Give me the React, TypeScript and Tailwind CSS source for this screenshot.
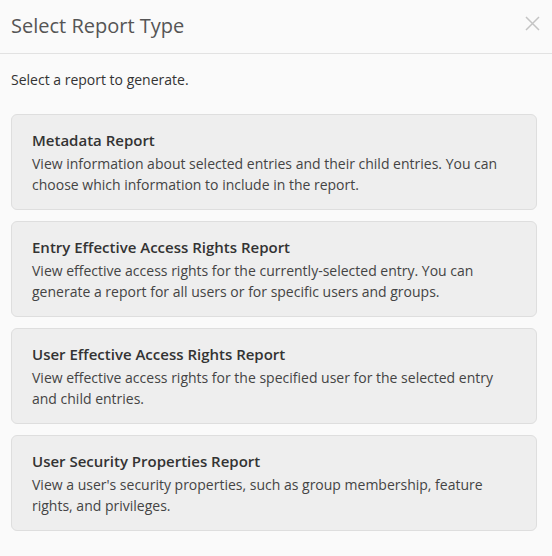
import React from 'react';

const reports = [
  {
    title: 'Metadata Report',
    text: 'View information about selected entries and their child entries. You can choose which information to include in the report.',
  },
  {
    title: 'Entry Effective Access Rights Report',
    text: 'View effective access rights for the currently-selected entry. You can generate a report for all users or for specific users and groups.',
  },
  {
    title: 'User Effective Access Rights Report',
    text: 'View effective access rights for the specified user for the selected entry and child entries.',
  },
  {
    title: 'User Security Properties Report',
    text: "View a user's security properties, such as group membership, feature rights, and privileges.",
  },
];

const App: React.FC = () => {
  return (
    <div className="w-[552px] h-[556px] bg-[#fafafa] text-[#333] font-['Open_Sans',sans-serif]">
      <div className="h-[54px] flex items-center justify-between pl-[11px] pr-[12px] border-b border-[#e2e2e2]">
        <h1 className="text-[20px] text-[#555] font-normal leading-none pb-[1px]">Select Report Type</h1>
        <button className="text-[#c4c4c4] -mt-[6px]">
          <svg width="15" height="15" viewBox="0 0 15 15" fill="none" stroke="currentColor" strokeWidth="1.5">
            <path d="M1 1 L14 14 M14 1 L1 14" />
          </svg>
        </button>
      </div>
      <div className="px-[11px] pt-[16px]">
        <p className="text-[14px] leading-[20px] text-[#333]">Select a report to generate.</p>
        <div className="mt-[24px] flex flex-col gap-[11px] pr-[4px]">
          {reports.map((r) => (
            <div
              key={r.title}
              className="h-[96px] bg-[#eeeeee] border border-[#dedede] rounded-[6px] px-[20px] pt-[14px] cursor-pointer"
            >
              <div className="text-[15px] leading-[22px] font-semibold text-[#333]">{r.title}</div>
              <div className="text-[14px] leading-[21px] text-[#444] mt-[2px]">{r.text}</div>
            </div>
          ))}
        </div>
      </div>
    </div>
  );
};

export default App;
